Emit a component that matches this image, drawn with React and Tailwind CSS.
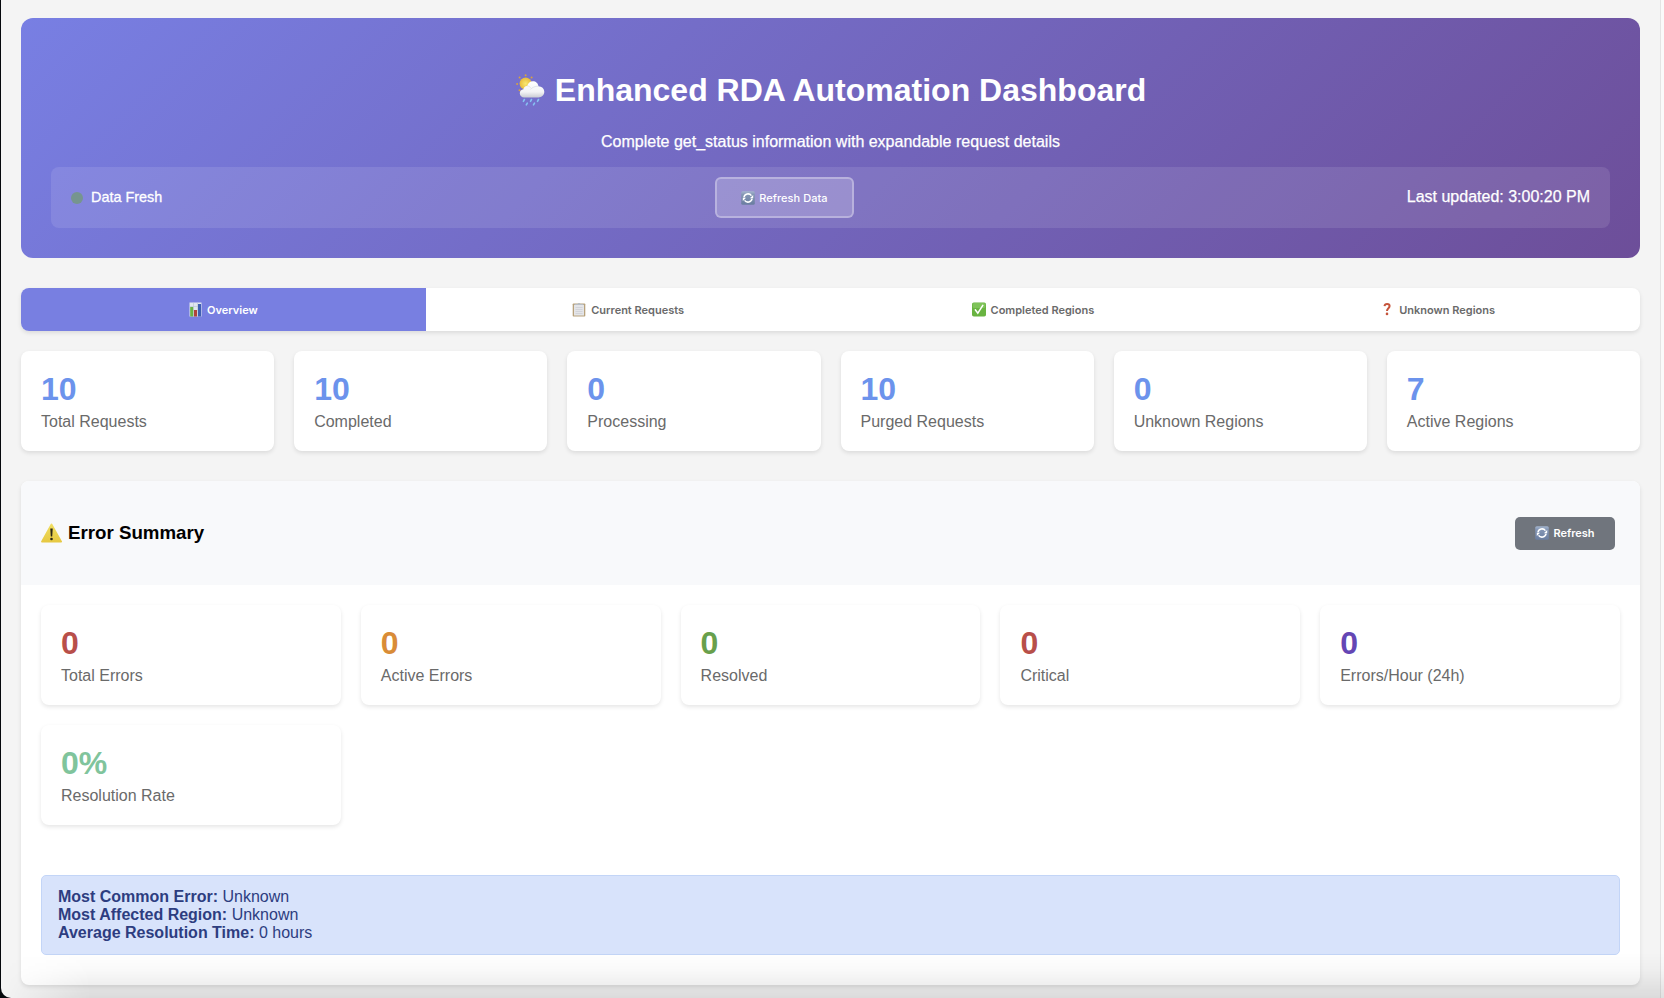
const WeatherIcon = () => (
  <svg width="32" height="34" viewBox="0 0 32 34" className="shrink-0">
    <defs>
      <linearGradient id="cloud" x1="0" y1="0" x2="0" y2="1">
        <stop offset="0" stopColor="#ffffff" />
        <stop offset="0.65" stopColor="#f3f4f6" />
        <stop offset="1" stopColor="#c9ccd3" />
      </linearGradient>
      <radialGradient id="sun">
        <stop offset="0" stopColor="#f9e871" />
        <stop offset="1" stopColor="#e8bb3c" />
      </radialGradient>
    </defs>
    <g fill="#d9a23e">
      <circle cx="10.6" cy="2.2" r="1" />
      <circle cx="4.6" cy="4.6" r="1" />
      <circle cx="16.6" cy="4.6" r="1" />
      <circle cx="2.1" cy="11" r="1" />
      <circle cx="4.5" cy="17.3" r="1" />
    </g>
    <circle cx="10.6" cy="10.6" r="6" fill="url(#sun)" />
    <path d="M9.400 24.500C6.600 24.500 4.800 22.600 4.800 20.200c0-2.100 1.500-3.700 3.700-4 .1-2 1.800-3.400 3.800-3.200.7-3 2.900-4.700 5.600-4.700 3 0 5.200 2.100 5.500 4.900 3.300.1 5.900 2.300 5.900 5.600 0 3.300-2.500 5.700-5.900 5.700z" fill="url(#cloud)" />
    <path d="M12.300 13c1.800 0 3 1 3.500 2.300M15.500 16.500c1.500-2.200 4.800-3.300 7.900-3.300" fill="none" stroke="#dddfe4" strokeWidth=".8" />
    <g stroke="#86c2f2" strokeWidth="1.600" strokeLinecap="round">
      <path d="M9.400 26.500l-1 1.800M16.500 26.500l-1 1.800M23.500 26.500l-1 1.800M12.300 30.200l-1 1.700M19.500 30.200l-1 1.700" />
    </g>
  </svg>
);

const ChartIcon = () => (
  <svg width="13" height="15" viewBox="0 0 13 15" className="shrink-0">
    <rect x="0.500" y="0.500" width="12" height="14" fill="#dfe6ef" />
    <path d="M.5 4.500h12M.5 8.500h12M4.500.5v14M8.500.5v14" stroke="#b9c4d4" strokeWidth=".6" />
    <rect x="1.200" y="5" width="3" height="9.500" fill="#69b245" />
    <rect x="5" y="8" width="3" height="6.500" fill="#b0433b" />
    <rect x="9" y="2" width="3" height="12.500" fill="#3f5fb2" />
  </svg>
);

const ClipboardIcon = () => (
  <svg width="14" height="15" viewBox="0 0 14 15" className="shrink-0">
    <rect x="0.700" y="1.500" width="12.600" height="13" rx="0.800" fill="#b8a27c" />
    <rect x="2" y="3" width="10" height="10.500" fill="#e4e5e8" />
    <path d="M3.500 5.500h7M3.500 7.500h7M3.500 9.500h7M3.500 11.500h7" stroke="#cccdd2" strokeWidth=".7" />
    <path d="M2.500 3V1.900h3L6.200 1h1.600l.7.900h3V3z" fill="#b9bec4" />
  </svg>
);

const CheckIcon = () => (
  <svg width="14" height="15" viewBox="0 0 14 15" className="shrink-0">
    <rect x="0" y="0.500" width="14" height="14" rx="1.800" fill="#69b441" />
    <rect x="0.700" y="1" width="12.600" height="5" rx="1.500" fill="#7fc35a" />
    <path d="M3.300 7.800l2.500 3.400L10.800 3.300" fill="none" stroke="#fff" strokeWidth="1.500" strokeLinecap="round" />
  </svg>
);

const QuestionIcon = () => (
  <svg width="14" height="15" viewBox="0 0 14 15" className="shrink-0">
    <path d="M4.500 4.200C4.700 2.600 5.700 1.900 7.100 1.900c1.600 0 2.500.9 2.500 2.200 0 2.100-2.600 2.200-2.600 4.900" fill="none" stroke="#c5543b" strokeWidth="2" />
    <circle cx="7" cy="11.900" r="1.300" fill="#c5543b" />
  </svg>
);

const RefreshIcon = () => (
  <svg width="14" height="14" viewBox="0 0 14 14" className="shrink-0">
    <defs>
      <linearGradient id="tile" x1="0" y1="0" x2="0" y2="1">
        <stop offset="0" stopColor="#a5b6cf" />
        <stop offset="0.250" stopColor="#8496b5" />
        <stop offset="1" stopColor="#6a7da0" />
      </linearGradient>
    </defs>
    <rect x="0.200" y="0.200" width="13.600" height="13.600" rx="1.600" fill="url(#tile)" />
    <path d="M2.900 6.300A4.200 4.200 0 0 1 10.400 4.600M11.100 7.700A4.200 4.200 0 0 1 3.600 9.400" fill="none" stroke="#fff" strokeWidth="1.500" />
    <path d="M12.200 4v3.200H8.900zM1.800 10V6.800h3.300z" fill="#fff" />
  </svg>
);

const WarningIcon = () => (
  <svg width="22" height="20" viewBox="0 0 22 20" className="shrink-0">
    <defs>
      <linearGradient id="warn" x1="0" y1="0" x2="0" y2="1">
        <stop offset="0" stopColor="#f1df63" />
        <stop offset="1" stopColor="#e6c841" />
      </linearGradient>
    </defs>
    <path d="M10.500.6c.4 0 .7.2.9.6l9.500 17c.4.700 0 1.300-.8 1.300H1c-.8 0-1.200-.6-.8-1.300l9.400-17c.2-.4.5-.6.9-.6z" fill="url(#warn)" />
    <path d="M9.300 5.400h2.400l-.5 8H9.800z" fill="#2b2718" />
    <circle cx="10.500" cy="16" r="1.300" fill="#2b2718" />
  </svg>
);

const tabs = [
  { label: "Overview", Icon: ChartIcon },
  { label: "Current Requests", Icon: ClipboardIcon },
  { label: "Completed Regions", Icon: CheckIcon },
  { label: "Unknown Regions", Icon: QuestionIcon },
];

const stats = [
  ["10", "Total Requests"],
  ["10", "Completed"],
  ["0", "Processing"],
  ["10", "Purged Requests"],
  ["0", "Unknown Regions"],
  ["7", "Active Regions"],
];

const errors = [
  ["0", "Total Errors", "text-[#b84f4a]"],
  ["0", "Active Errors", "text-[#d98c37]"],
  ["0", "Resolved", "text-[#68a04c]"],
  ["0", "Critical", "text-[#b84f4a]"],
  ["0", "Errors/Hour (24h)", "text-[#6446b4]"],
  ["0%", "Resolution Rate", "text-[#80c49c]"],
];

const info = [
  ["Most Common Error:", "Unknown"],
  ["Most Affected Region:", "Unknown"],
  ["Average Resolution Time:", "0 hours"],
];

function StatCard({ value, label, color }) {
  return (
    <div className="h-[100px] rounded-lg bg-white p-5 shadow-[0_2px_4px_rgba(0,0,0,0.1)]">
      <div className={"text-[32px] font-bold leading-[37px] " + color}>{value}</div>
      <div className="mt-[5px] text-base leading-[18px] text-[#6a6a6a]">{label}</div>
    </div>
  );
}

export default function App() {
  return (
    <div className="h-[998px] overflow-hidden bg-[#05080c] font-['Liberation_Sans',Arial,sans-serif]">
      <div className="relative ml-px flex h-full overflow-hidden rounded-bl-[10px] bg-[#f4f4f4]">
        <main className="w-[1659px] shrink-0 pl-5 pr-5 pt-[18px]">
          <header className="h-60 rounded-xl bg-[linear-gradient(135deg,#787fe3_0%,#6d4e99_100%)] px-[30px] pt-[51px] text-white">
            <h1 className="flex h-[41px] items-center justify-center gap-2 text-[32px] font-bold leading-[37px]">
              <WeatherIcon />
              <span className="pt-px">Enhanced RDA Automation Dashboard</span>
            </h1>
            <p className="mt-[23px] text-center text-base leading-[18px] [-webkit-text-stroke:0.250px_white]">
              Complete get_status information with expandable request details
            </p>
            <div className="mt-4 flex h-[61px] items-center justify-between rounded-lg bg-white/10 px-5">
              <div className="flex items-center gap-2">
                <span className="size-3 rounded-full bg-[#76958f]" />
                <span className="pb-0.5 text-[14.400px] leading-4 [-webkit-text-stroke:0.300px_white]">Data Fresh</span>
              </div>
              <button className="flex h-[41px] w-[139px] items-center justify-center gap-1 rounded-md border-2 border-white/30 bg-white/20 font-['Inter',sans-serif] text-[11px] font-medium tracking-[0.050px]">
                <RefreshIcon />
                <span className="pt-px">Refresh Data</span>
              </button>
              <span className="pb-0.5 text-base leading-[18px] [-webkit-text-stroke:0.250px_white]">Last updated: 3:00:20 PM</span>
            </div>
          </header>

          <nav className="mt-[30px] grid h-[43px] grid-cols-4 overflow-hidden rounded-lg bg-white font-['Inter',sans-serif] text-[11px] font-semibold shadow-[0_2px_4px_rgba(0,0,0,0.1)]">
            {tabs.map(({ label, Icon }, i) => (
              <button
                key={label}
                className={"flex items-center justify-center gap-[5px] " + (i === 0 ? "bg-[#787fe1] text-white" : "text-[#6a6a6a]")}
              >
                <Icon />
                <span className="pt-px">{label}</span>
              </button>
            ))}
          </nav>

          <section className="mt-5 grid grid-cols-6 gap-5">
            {stats.map(([value, label]) => (
              <StatCard key={label} value={value} label={label} color="text-[#6c93ec]" />
            ))}
          </section>

          <section className="mt-[30px] h-[504px] overflow-hidden rounded-lg bg-white shadow-[0_2px_4px_rgba(0,0,0,0.1)]">
            <div className="flex h-[104px] items-center justify-between bg-[#f8f9fb] pl-5 pr-[25px]">
              <h3 className="flex items-center gap-[5px] text-[18.720px] font-bold leading-[22px] text-black">
                <WarningIcon />
                <span>Error Summary</span>
              </h3>
              <button className="flex h-[33px] w-[100px] items-center justify-center gap-1 rounded-[5px] bg-[#70757d] font-['Inter',sans-serif] text-[11px] font-semibold text-white">
                <RefreshIcon />
                <span className="pt-px">Refresh</span>
              </button>
            </div>
            <div className="grid grid-cols-5 gap-5 px-5 pt-5">
              {errors.map(([value, label, color]) => (
                <StatCard key={label} value={value} label={label} color={color} />
              ))}
            </div>
            <div className="mx-5 mt-[50px] h-20 rounded-[5px] border border-[#c3d5f7] bg-[#d8e3fb] px-4 py-3 text-base leading-[18px] text-[#2d3d80]">
              {info.map(([name, value]) => (
                <div key={name}>
                  <strong>{name}</strong> {value}
                </div>
              ))}
            </div>
          </section>
        </main>
        <div className="grow border-l border-[#e4e4e4] bg-[#fafafa]" />
        <div className="absolute inset-x-0 bottom-0 h-[46px] bg-[linear-gradient(to_bottom,transparent,rgba(0,0,0,0.025)_40%,rgba(0,0,0,0.100))] [mask-image:linear-gradient(to_right,transparent,black_90px)]" />
      </div>
    </div>
  );
}
